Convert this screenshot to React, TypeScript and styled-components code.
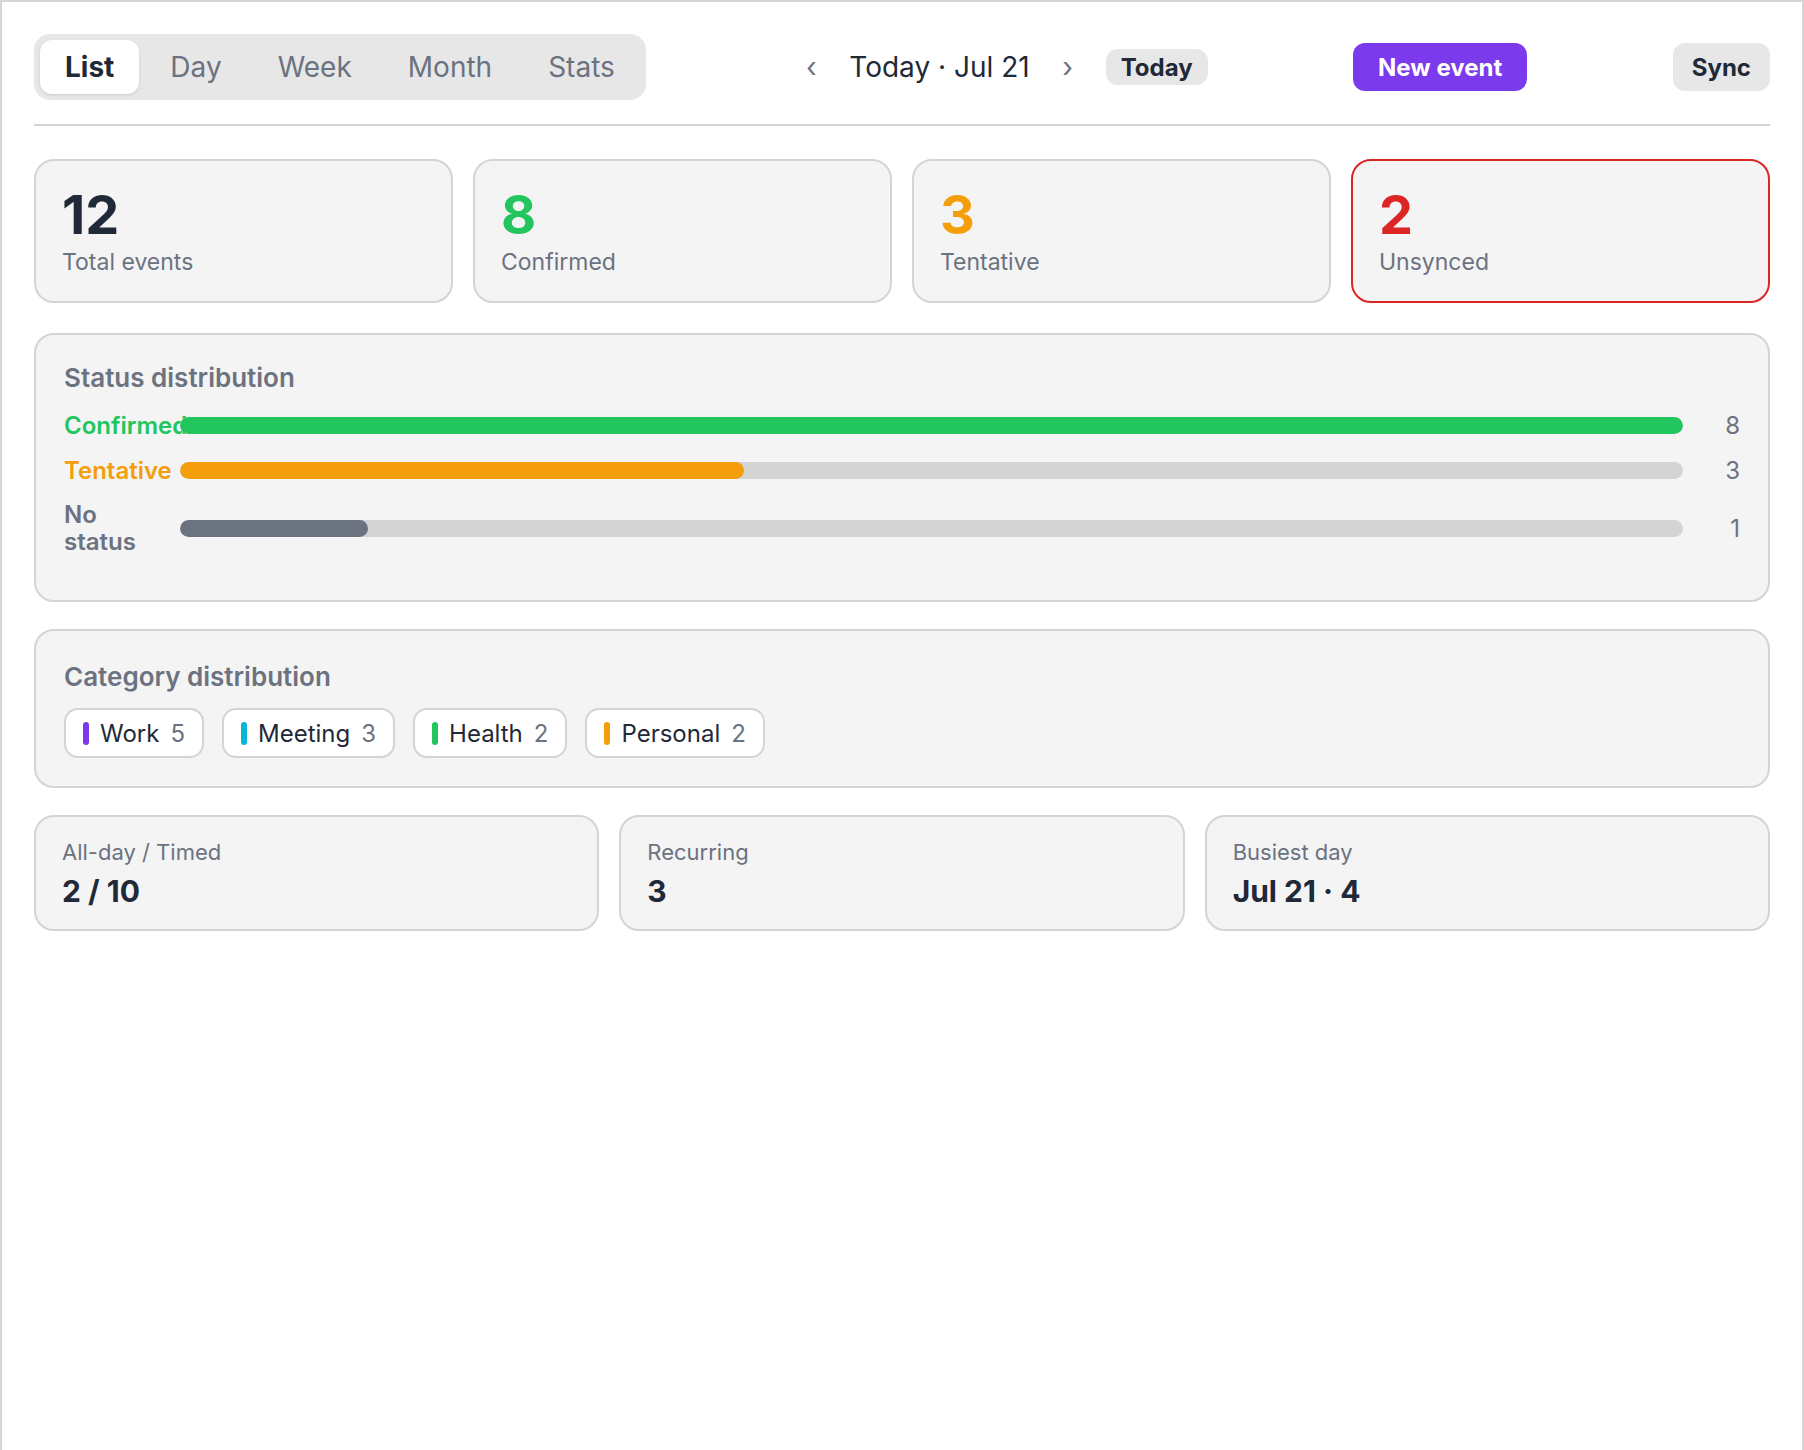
import React from "react";
import styled, { createGlobalStyle } from "styled-components";

const GlobalStyle = createGlobalStyle`
  html, body {
    margin: 0;
    padding: 0;
    background: #ffffff;
    font-family: Inter, "Noto Sans", "Liberation Sans", sans-serif;
    color: #1f2937;
  }
  * {
    box-sizing: border-box;
  }
`;

const Frame = styled.div`
  min-height: 100vh;
  border: 2px solid #d6d6d6;
  border-bottom: none;
  padding: 32px 32px;
`;

const Header = styled.header`
  display: flex;
  align-items: center;
  justify-content: space-between;
  padding-bottom: 24px;
  border-bottom: 2px solid #d4d4d4;
`;

const Tabs = styled.div`
  display: flex;
  gap: 6px;
  padding: 6px;
  background: #e7e7e7;
  border-radius: 16px;
`;

const Tab = styled.button<{ active?: boolean }>`
  height: 54px;
  padding: 0 25px;
  border: none;
  border-radius: 12px;
  font-family: inherit;
  font-size: 28px;
  font-weight: ${(p) => (p.active ? 700 : 400)};
  color: ${(p) => (p.active ? "#1f2937" : "#6b7280")};
  background: ${(p) => (p.active ? "#ffffff" : "transparent")};
  box-shadow: ${(p) => (p.active ? "0 1px 3px rgba(0, 0, 0, 0.12)" : "none")};
  cursor: pointer;
`;

const Nav = styled.div`
  display: flex;
  align-items: center;
  gap: 18px;
`;

const Chevron = styled.button`
  width: 40px;
  padding: 0;
  border: none;
  background: none;
  font-family: inherit;
  font-size: 28px;
  color: #6b7280;
  cursor: pointer;
`;

const DateLabel = styled.span`
  font-size: 28px;
  color: #1f2937;
`;

const SoftButton = styled.button`
  height: 36px;
  padding: 0 15px;
  border: none;
  border-radius: 12px;
  background: #e7e7e7;
  font-family: inherit;
  font-size: 24px;
  font-weight: 700;
  color: #1f2937;
  cursor: pointer;
`;

const ActionButton = styled.button<{ primary?: boolean }>`
  height: 48px;
  padding: 0 ${(p) => (p.primary ? "25px" : "19px")};
  border: none;
  border-radius: 12px;
  background: ${(p) => (p.primary ? "#7c3aed" : "#e7e7e7")};
  font-family: inherit;
  font-size: 24px;
  font-weight: 700;
  color: ${(p) => (p.primary ? "#ffffff" : "#1f2937")};
  cursor: pointer;
`;

const Content = styled.main`
  display: flex;
  flex-direction: column;
  gap: 27px;
  margin-top: 33px;
`;

const StatGrid = styled.div`
  display: grid;
  grid-template-columns: repeat(4, 1fr);
  gap: 20px;
  margin-bottom: 3px;
`;

const StatCard = styled.div<{ alert?: boolean }>`
  border: 2px solid ${(p) => (p.alert ? "#dc2626" : "#d4d4d4")};
  border-radius: 20px;
  background: #f4f4f4;
  padding: 22px 26px 23px;
`;

const StatValue = styled.div<{ tone: string }>`
  font-size: 54px;
  font-weight: 700;
  line-height: 1.2;
  color: ${(p) => p.tone};
`;

const StatLabel = styled.div`
  font-size: 23px;
  line-height: 1.3;
  color: #6b7280;
`;

const Panel = styled.section<{ top: number }>`
  border: 2px solid #d4d4d4;
  border-radius: 20px;
  background: #f4f4f4;
  padding: ${(p) => p.top}px 28px 28px;
`;

const PanelTitle = styled.h2<{ space: number }>`
  margin: 0 0 ${(p) => p.space}px;
  font-size: 26px;
  font-weight: 600;
  line-height: 1.2;
  color: #6b7280;
`;

const StatusRow = styled.div`
  display: grid;
  grid-template-columns: 100px 1fr 41px;
  column-gap: 16px;
  align-items: center;
  margin-bottom: 16px;
`;

const StatusName = styled.div<{ tone: string }>`
  font-size: 24px;
  font-weight: 600;
  line-height: 1.15;
  color: ${(p) => p.tone};
`;

const Track = styled.div`
  height: 17px;
  border-radius: 9px;
  background: #d4d4d4;
  overflow: hidden;
`;

const Fill = styled.div<{ tone: string }>`
  height: 100%;
  border-radius: 9px;
  background: ${(p) => p.tone};
`;

const Count = styled.div`
  text-align: right;
  font-size: 24px;
  color: #6b7280;
`;

const Chips = styled.div`
  display: flex;
  flex-wrap: wrap;
  gap: 18px;
`;

const Chip = styled.div`
  display: flex;
  align-items: center;
  gap: 11px;
  height: 50px;
  padding: 0 17px;
  border: 2px solid #d4d4d4;
  border-radius: 14px;
  background: #ffffff;
`;

const ChipBar = styled.span<{ tone: string }>`
  width: 6px;
  height: 23px;
  border-radius: 3px;
  background: ${(p) => p.tone};
`;

const ChipName = styled.span`
  font-size: 24px;
  color: #1f2937;
`;

const ChipCount = styled.span`
  font-size: 24px;
  color: #6b7280;
`;

const InfoGrid = styled.div`
  display: grid;
  grid-template-columns: repeat(3, 1fr);
  gap: 20px;
`;

const InfoCard = styled.div`
  border: 2px solid #d4d4d4;
  border-radius: 20px;
  background: #f4f4f4;
  padding: 21px 26px 20px;
`;

const InfoLabel = styled.div`
  font-size: 22px;
  line-height: 1.3;
  color: #6b7280;
`;

const InfoValue = styled.div`
  margin-top: 6px;
  font-size: 30px;
  font-weight: 700;
  line-height: 1.2;
  color: #1f2937;
`;

const tabs = ["List", "Day", "Week", "Month", "Stats"];

const stats = [
  { value: "12", label: "Total events", tone: "#1f2937" },
  { value: "8", label: "Confirmed", tone: "#22c55e" },
  { value: "3", label: "Tentative", tone: "#f59e0b" },
  { value: "2", label: "Unsynced", tone: "#dc2626", alert: true },
];

const statuses = [
  { name: "Confirmed", count: 8, tone: "#22c55e", nameTone: "#22c55e" },
  { name: "Tentative", count: 3, tone: "#f59e0b", nameTone: "#f59e0b" },
  { name: "No status", count: 1, tone: "#6b7280", nameTone: "#6b7280" },
];

const categories = [
  { name: "Work", count: 5, tone: "#7c3aed" },
  { name: "Meeting", count: 3, tone: "#06b6d4" },
  { name: "Health", count: 2, tone: "#22c55e" },
  { name: "Personal", count: 2, tone: "#f59e0b" },
];

const info = [
  { label: "All-day / Timed", value: "2 / 10" },
  { label: "Recurring", value: "3" },
  { label: "Busiest day", value: "Jul 21 · 4" },
];

const App: React.FC = () => {
  const max = Math.max(...statuses.map((s) => s.count));

  return (
    <>
      <GlobalStyle />
      <Frame>
        <Header>
          <Tabs>
            {tabs.map((t) => (
              <Tab key={t} active={t === "List"}>
                {t}
              </Tab>
            ))}
          </Tabs>
          <Nav>
            <Chevron aria-label="Previous">‹</Chevron>
            <DateLabel>Today · Jul 21</DateLabel>
            <Chevron aria-label="Next">›</Chevron>
            <SoftButton>Today</SoftButton>
          </Nav>
          <ActionButton primary>New event</ActionButton>
          <ActionButton>Sync</ActionButton>
        </Header>

        <Content>
          <StatGrid>
            {stats.map((s) => (
              <StatCard key={s.label} alert={s.alert}>
                <StatValue tone={s.tone}>{s.value}</StatValue>
                <StatLabel>{s.label}</StatLabel>
              </StatCard>
            ))}
          </StatGrid>

          <Panel top={27}>
            <PanelTitle space={18}>Status distribution</PanelTitle>
            {statuses.map((s) => (
              <StatusRow key={s.name}>
                <StatusName tone={s.nameTone}>{s.name}</StatusName>
                <Track>
                  <Fill tone={s.tone} style={{ width: `${(s.count / max) * 100}%` }} />
                </Track>
                <Count>{s.count}</Count>
              </StatusRow>
            ))}
          </Panel>

          <Panel top={30}>
            <PanelTitle space={16}>Category distribution</PanelTitle>
            <Chips>
              {categories.map((c) => (
                <Chip key={c.name}>
                  <ChipBar tone={c.tone} />
                  <ChipName>{c.name}</ChipName>
                  <ChipCount>{c.count}</ChipCount>
                </Chip>
              ))}
            </Chips>
          </Panel>

          <InfoGrid>
            {info.map((i) => (
              <InfoCard key={i.label}>
                <InfoLabel>{i.label}</InfoLabel>
                <InfoValue>{i.value}</InfoValue>
              </InfoCard>
            ))}
          </InfoGrid>
        </Content>
      </Frame>
    </>
  );
};

export default App;
